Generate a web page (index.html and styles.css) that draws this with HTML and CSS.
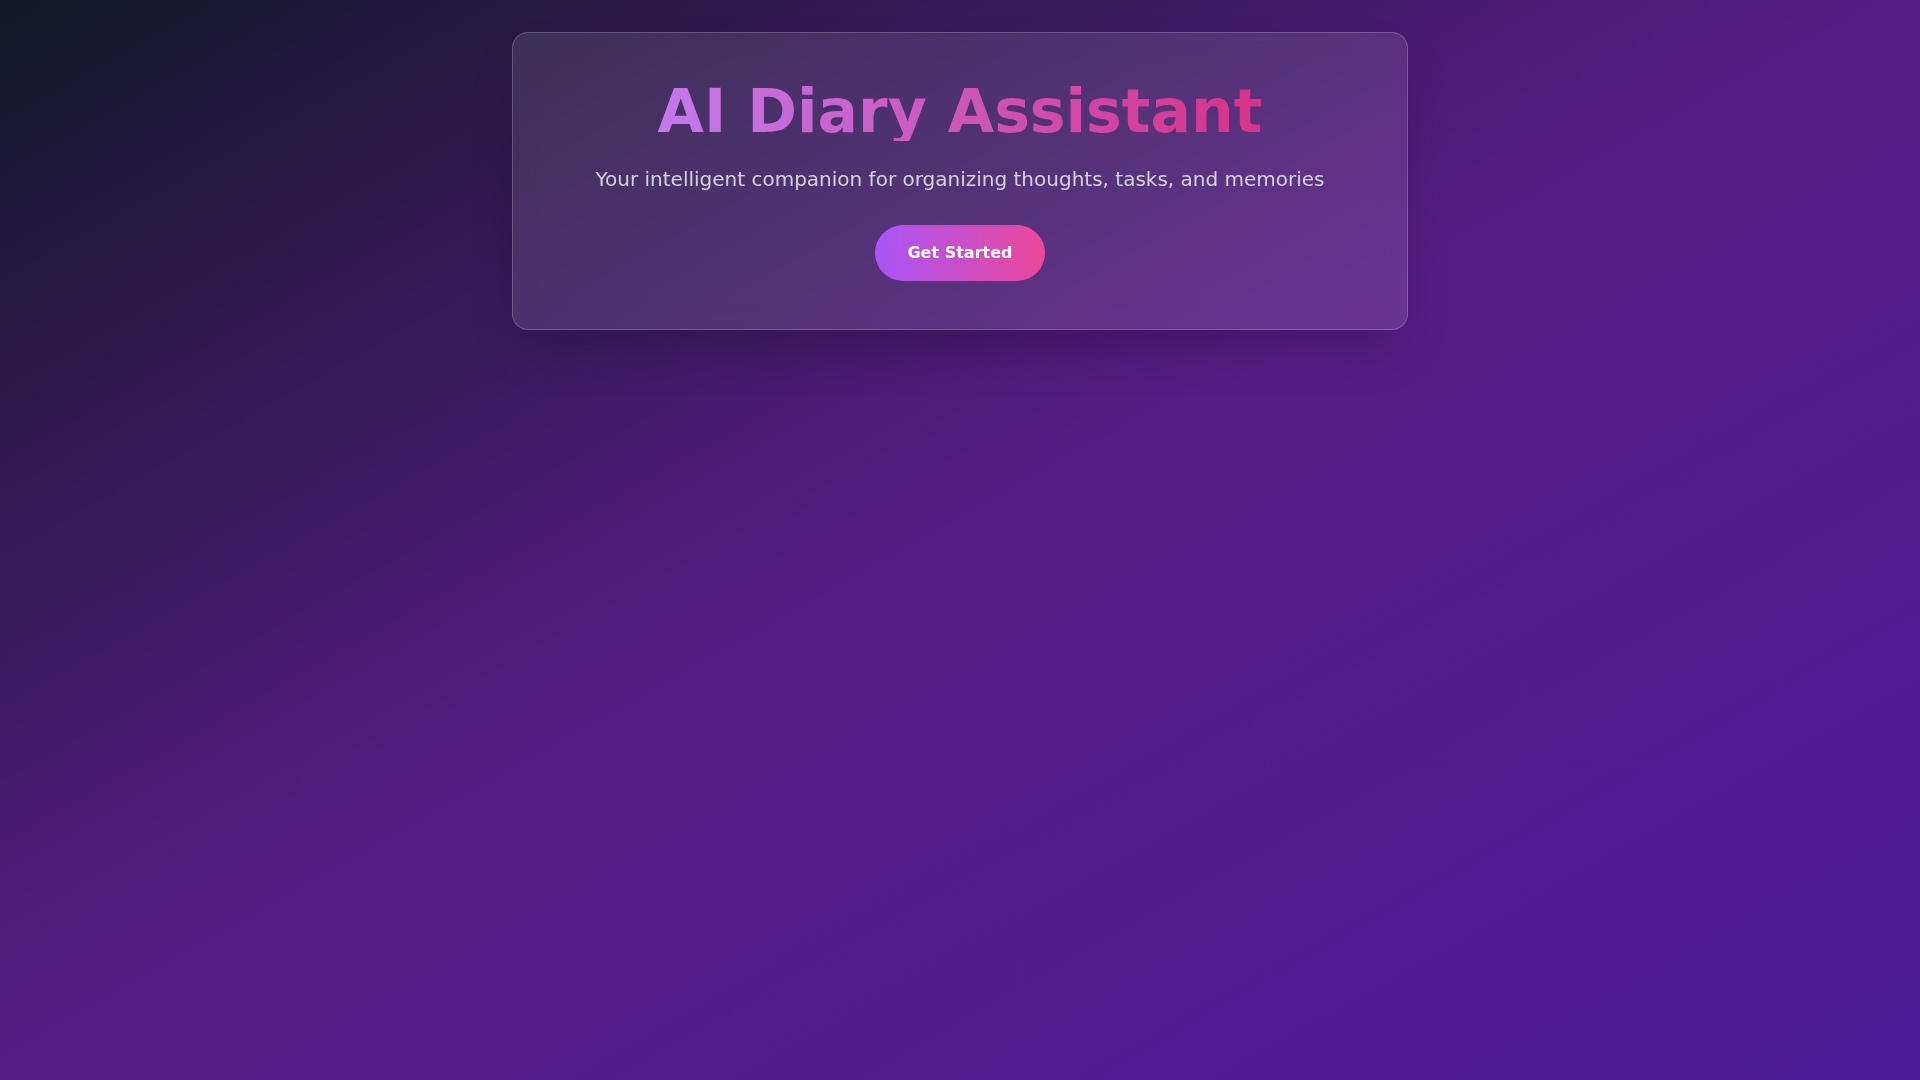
FILE: index.html
```html
<!DOCTYPE html>
<html lang="en">
<head>
<meta charset="utf-8">
<title>AI Diary Assistant</title>
<link rel="stylesheet" href="styles.css">
</head>
<body>
<main class="page">
  <section class="hero-card">
    <h1 class="hero-title">AI Diary Assistant</h1>
    <p class="hero-subtitle">Your intelligent companion for organizing thoughts, tasks, and memories</p>
    <button class="hero-button" type="button">Get Started</button>
  </section>
</main>
</body>
</html>
```

FILE: styles.css
```css
* {
  box-sizing: border-box;
}

html, body {
  margin: 0;
  padding: 0;
}

body {
  font-family: "DejaVu Sans", "Noto Sans", sans-serif;
  min-height: 100vh;
  background: linear-gradient(to bottom right, #111827, #581c87, #4c1d95);
  background-attachment: fixed;
}

.page {
  min-height: 100vh;
  padding: 32px;
}

.hero-card {
  max-width: 896px;
  margin: 0 auto;
  padding: 48px;
  display: flex;
  flex-direction: column;
  align-items: center;
  text-align: center;
  background: rgba(255, 255, 255, 0.1);
  border: 1px solid rgba(255, 255, 255, 0.2);
  border-radius: 16px;
  box-shadow: 0 25px 50px -12px rgba(0, 0, 0, 0.25);
  backdrop-filter: blur(12px);
}

.hero-title {
  align-self: stretch;
  margin: 0 0 24px;
  font-size: 60px;
  line-height: 1;
  font-weight: 700;
  background: linear-gradient(to right, #c084fc, #db2777);
  -webkit-background-clip: text;
  background-clip: text;
  color: transparent;
}

.hero-subtitle {
  margin: 0 0 32px;
  font-size: 20px;
  line-height: 28px;
  color: #d1d5db;
}

.hero-button {
  font-family: inherit;
  font-size: 16px;
  line-height: 24px;
  font-weight: 700;
  color: #ffffff;
  padding: 16px 32px;
  border: none;
  border-radius: 9999px;
  background: linear-gradient(to right, #a855f7, #ec4899);
  cursor: pointer;
}
```
